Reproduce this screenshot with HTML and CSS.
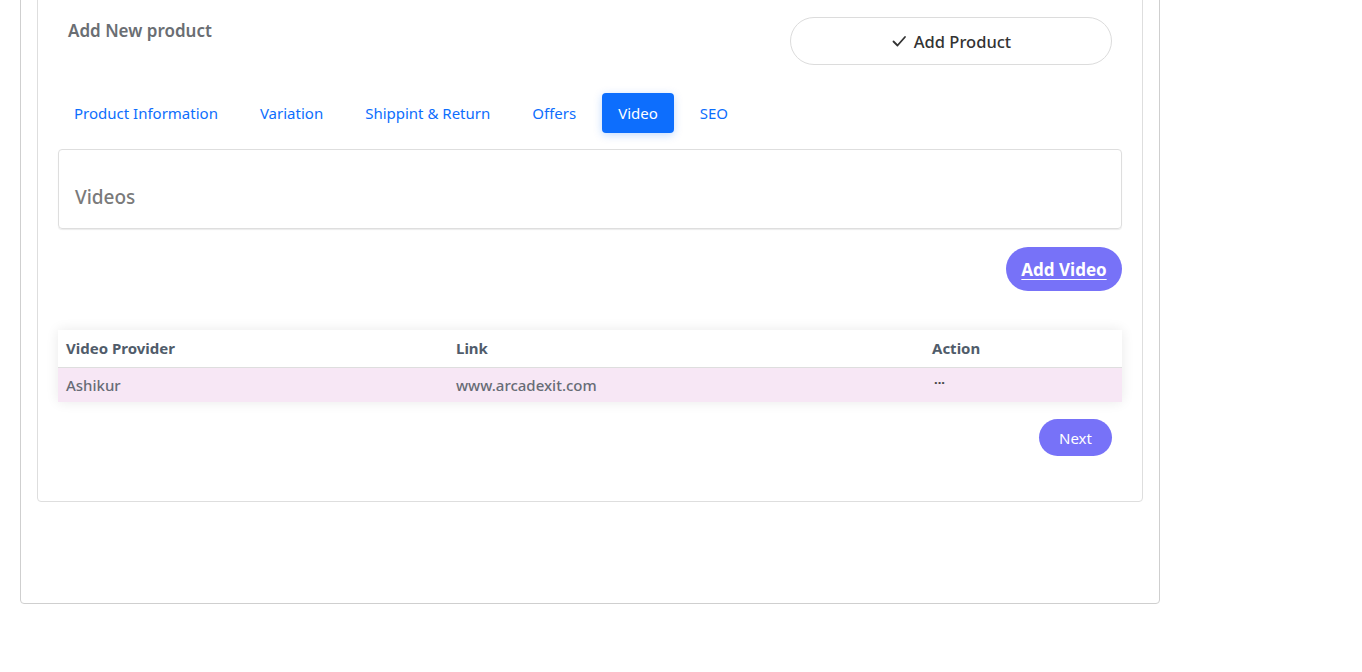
FILE: index.html
```html
<!DOCTYPE html>
<html lang="en">
<head>
<meta charset="utf-8">
<title>Add New product</title>
<link rel="stylesheet" href="styles.css">
</head>
<body>
<div class="page">
  <div class="outer">
    <div class="inner">
      <div class="head-row">
        <h4 class="title">Add New product</h4>
        <button class="btn-add-product" type="button">
          <svg class="check" width="16" height="16" viewBox="0 0 16 16" aria-hidden="true"><polyline points="2.5,8.5 6.5,12.5 14,4" fill="none" stroke="#333" stroke-width="1.8" stroke-linecap="round" stroke-linejoin="round"/></svg>
          Add Product
        </button>
      </div>
      <nav class="tabs">
        <a class="tab">Product Information</a>
        <a class="tab">Variation</a>
        <a class="tab">Shippint &amp; Return</a>
        <a class="tab">Offers</a>
        <a class="tab active">Video</a>
        <a class="tab">SEO</a>
      </nav>
      <div class="card">
        <h5 class="card-title">Videos</h5>
      </div>
      <div class="actions">
        <a class="btn-purple btn-add-video">Add Video</a>
      </div>
      <table class="vtable">
        <thead>
          <tr><th class="c1">Video Provider</th><th class="c2">Link</th><th class="c3">Action</th></tr>
        </thead>
        <tbody>
          <tr><td>Ashikur</td><td>www.arcadexit.com</td><td class="dots">...</td></tr>
        </tbody>
      </table>
      <div class="actions next-row">
        <button class="btn-purple btn-next" type="button">Next</button>
      </div>
    </div>
  </div>
</div>
</body>
</html>
```
FILE: styles.css
```css
* { box-sizing: border-box; }
html, body { margin: 0; padding: 0; background: #fff; }
body {
  font-family: "Noto Sans", "Open Sans", sans-serif;
  color: #555;
  overflow: hidden;
}
.page {
  padding-left: 20px;
  width: 1160px;
}
.outer {
  margin-top: -40px;
  border: 1px solid #cfcfcf;
  border-radius: 4px;
  padding: 19px 16px 101px 16px;
}
.inner {
  border: 1px solid #dedede;
  border-radius: 4px;
  padding: 36px 20px 45px 20px;
}
.head-row {
  display: flex;
  justify-content: space-between;
  align-items: flex-start;
  padding: 0 10px 0 10px;
}
.title {
  margin: 0;
  padding-top: 2px;
  font-size: 17px;
  line-height: 24px;
  font-weight: 600;
  color: #6a6e73;
}
.btn-add-product {
  width: 322px;
  height: 48px;
  border: 1px solid #dcdcdc;
  border-radius: 24px;
  background: #fff;
  font-family: inherit;
  font-size: 16.5px;
  font-weight: 500;
  color: #333;
  display: flex;
  align-items: center;
  justify-content: center;
  gap: 7px;
  padding: 0;
}
.check { display: block; }
.tabs {
  display: flex;
  gap: 10px;
  margin-top: 28px;
}
.tab {
  padding: 8px 16px;
  font-size: 15px;
  line-height: 24px;
  color: #0d6efd;
  border-radius: 4px;
}
.tab.active {
  background: #0d6efd;
  color: #fff;
  padding: 8px 16px;
  box-shadow: 0 2px 8px rgba(13, 110, 253, 0.25);
}
.card {
  margin-top: 16px;
  border: 1px solid #dedede;
  border-radius: 4px;
  box-shadow: 0 1px 1px rgba(0, 0, 0, 0.08);
  padding: 32px 16px 16px 16px;
}
.card-title {
  margin: 0;
  font-size: 19px;
  line-height: 30px;
  font-weight: 500;
  color: #7a7a7a;
}
.actions {
  display: flex;
  justify-content: flex-end;
}
.btn-purple {
  background: #7772f8;
  color: #fff;
  border: none;
  font-family: inherit;
  display: inline-flex;
  align-items: center;
  justify-content: center;
}
.btn-add-video {
  margin-top: 18px;
  width: 116px;
  height: 44px;
  border-radius: 22px;
  font-size: 17px;
  font-weight: 700;
  text-decoration: underline;
  text-underline-offset: 3px;
}
.vtable {
  margin-top: 39px;
  width: 100%;
  border-collapse: collapse;
  box-shadow: 0 0 12px rgba(0, 0, 0, 0.09);
  font-size: 15px;
}
.vtable th {
  text-align: left;
  font-weight: 700;
  color: #505c6a;
  padding: 0 8px;
  height: 37px;
  background: #fff;
  border-bottom: 1px solid #dedede;
}
.vtable .c1 { width: 390px; }
.vtable .c2 { width: 476px; }
.vtable td {
  background: #f7e7f5;
  color: #676c76;
  font-weight: 500;
  padding: 0 8px;
  height: 35px;
  vertical-align: middle;
}
.vtable td.dots {
  vertical-align: top;
  padding-top: 2px;
  padding-left: 10px;
  font-weight: 700;
  font-size: 13px;
  color: #444;
  line-height: 18px;
}
.next-row { padding-right: 10px; }
.btn-next {
  margin-top: 17px;
  width: 73px;
  height: 37px;
  border-radius: 19px;
  font-size: 15px;
}
```
